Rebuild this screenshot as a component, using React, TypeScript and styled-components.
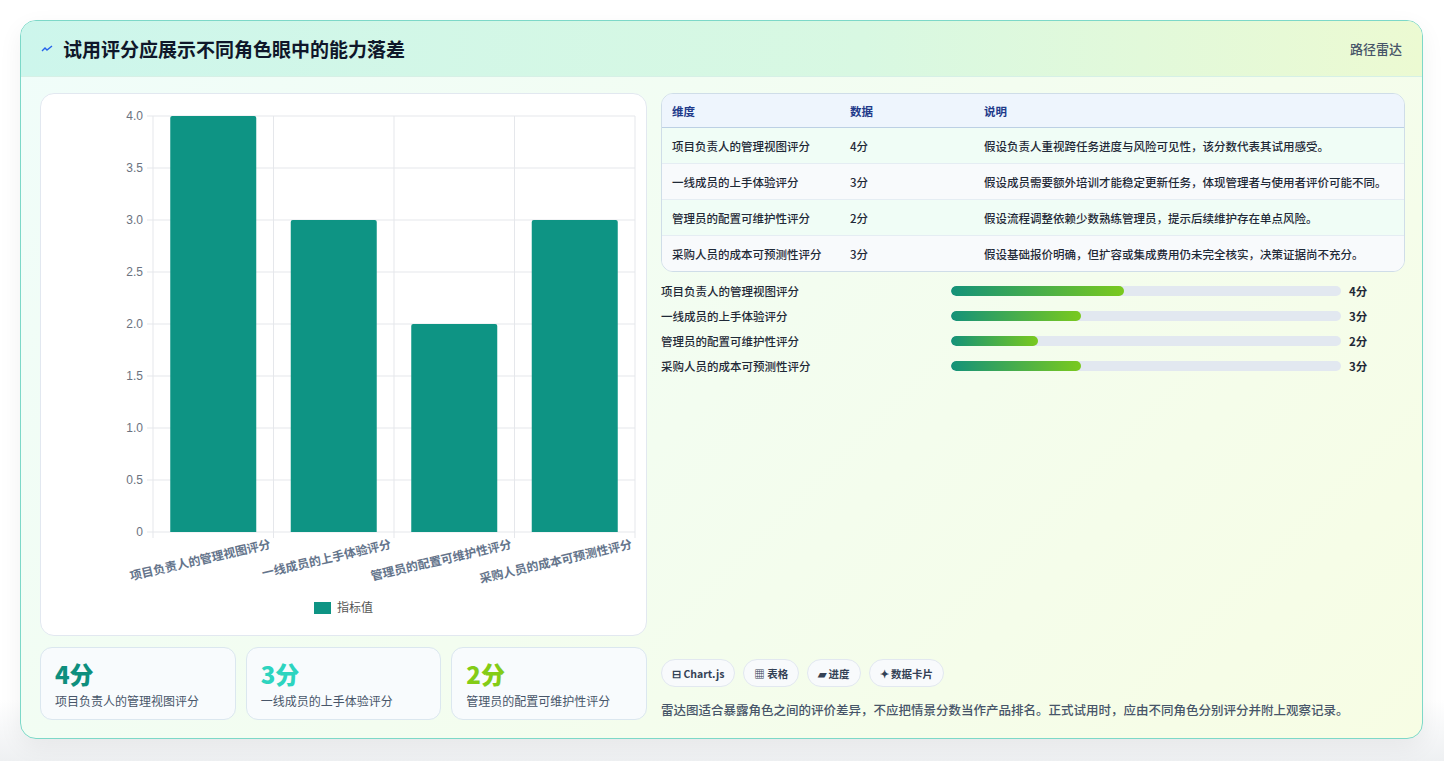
import React from "react";
import styled, { createGlobalStyle } from "styled-components";

const Global = createGlobalStyle`
  html, body { margin: 0; padding: 0; background: #f3f4f6; }
  body { font-family: "Noto Sans CJK SC", "Noto Sans", sans-serif; }
`;
const Page = styled.div`
  padding: 20px 21px 21px 20px; background: linear-gradient(#fff, #fff 700px, #eef0f2);
  height: 761px; box-sizing: border-box;
`;
const Card = styled.div`
  border: 1px solid #7dd8c8; border-radius: 16px; overflow: hidden;
  background: linear-gradient(135deg, #f0fdfa 0%, #f3fdf0 50%, #f7fde4 100%);
  box-shadow: 0 8px 24px rgba(0,0,0,0.06); height: 719px; box-sizing: border-box;
`;
const Header = styled.div`
  height: 55px; display: flex; align-items: center; justify-content: space-between;
  padding: 0 20px 0 20px; border-bottom: 1px solid #d6f0e6;
  background: linear-gradient(90deg, #cdf6ec 0%, #d8f8e2 60%, #ecfad2 100%);
`;
const Title = styled.h1`
  margin: 0; font-size: 19px; font-weight: 700; color: #0f172a; display: flex; align-items: center; gap: 10px;
`;
const HeadTag = styled.span` font-size: 13px; color: #475569; font-weight: 500; `;
const Body = styled.div`
  display: grid; grid-template-columns: 607px 744px; gap: 14px; padding: 16px 18px 18px 19px;
`;
const Col = styled.div` display: flex; flex-direction: column; `;
const ChartCard = styled.div`
  height: 543px; background: #fff; border: 1px solid #e2e8f0; border-radius: 14px; box-sizing: border-box;
`;
const Stats = styled.div` display: grid; grid-template-columns: repeat(3, 1fr); gap: 10px; margin-top: 11px; `;
const Stat = styled.div`
  height: 73px; box-sizing: border-box; border: 1px solid #dbe7ef; border-radius: 12px;
  background: #f8fbfd; padding: 12px 14px;
`;
const StatVal = styled.div<{ c: string }>` font-size: 24px; font-weight: 800; color: ${p => p.c}; line-height: 28px; `;
const StatLbl = styled.div` font-size: 12px; color: #475569; margin-top: 4px; `;
const Table = styled.div`
  border: 1px solid #cfdde8; border-radius: 12px; overflow: hidden; background: #f8fafc;
`;
const Row = styled.div<{ head?: boolean; alt?: boolean }>`
  display: grid; grid-template-columns: 178px 134px 1fr; padding: 0 10px; align-items: start;
  font-size: 11.5px; line-height: 18px; font-weight: ${p => p.head ? 600 : 500};
  color: ${p => p.head ? "#1e3a8a" : "#1f2937"};
  background: ${p => p.head ? "#eef5fd" : p.alt ? "#f0fdf6" : "#f8fafc"};
  border-bottom: ${p => p.head ? "1px solid #bcd0e4" : "1px solid #e5edf3"};
  padding-top: ${p => p.head ? 8 : 9}px; padding-bottom: ${p => p.head ? 7 : 8}px;
  &:last-child { border-bottom: none; }
`;
const Bars = styled.div` display: flex; flex-direction: column; gap: 7px; margin-top: 10px; `;
const BarRow = styled.div`
  display: grid; grid-template-columns: 282px 390px 1fr; column-gap: 8px; align-items: center;
  font-size: 11.5px; color: #1f2937; font-weight: 500; height: 18px;
`;
const Track = styled.div` height: 10px; border-radius: 5px; background: #e2e8f0; overflow: hidden; `;
const Fill = styled.div` height: 100%; border-radius: 5px; background: linear-gradient(90deg, #149279, #7ac91e); `;
const BarVal = styled.span` font-weight: 700; `;
const Spacer = styled.div` flex: 1; `;
const Chips = styled.div` display: flex; gap: 8px; `;
const Chip = styled.span`
  height: 28px; box-sizing: border-box; padding: 0 10px; border: 1px solid #e2e8f0; border-radius: 14px;
  background: #f8fafc; font-size: 10.5px; font-weight: 600; color: #334155; display: flex; align-items: center; gap: 3px;
`;
const Note = styled.p` margin: 13px 0 1px; font-size: 12.5px; color: #475569; font-weight: 500; `;

const data = [
  ["项目负责人的管理视图评分", 4, "假设负责人重视跨任务进度与风险可见性，该分数代表其试用感受。"],
  ["一线成员的上手体验评分", 3, "假设成员需要额外培训才能稳定更新任务，体现管理者与使用者评价可能不同。"],
  ["管理员的配置可维护性评分", 2, "假设流程调整依赖少数熟练管理员，提示后续维护存在单点风险。"],
  ["采购人员的成本可预测性评分", 3, "假设基础报价明确，但扩容或集成费用仍未完全核实，决策证据尚不充分。"],
] as const;

function Chart() {
  const x0 = 112, x1 = 594, y0 = 22, y1 = 438;
  const cw = (x1 - x0) / 4;
  const ticks = [0, 0.5, 1, 1.5, 2, 2.5, 3, 3.5, 4];
  return (
    <svg width="605" height="541" style={{ display: "block" }}>
      {ticks.map(t => {
        const y = y1 - (t / 4) * (y1 - y0);
        return <g key={t}>
          <line x1={x0 - 6} x2={x1} y1={y} y2={y} stroke="#e5e7eb" />
          <text x={x0 - 10} y={y + 4} textAnchor="end" fontSize="12" fill="#6b7280" fontFamily="Liberation Sans, sans-serif">{t === 0 ? "0" : t.toFixed(1)}</text>
        </g>;
      })}
      {[0, 1, 2, 3, 4].map(i => <line key={i} x1={x0 + i * cw} x2={x0 + i * cw} y1={y0} y2={y1 + 6} stroke="#e5e7eb" />)}
      {data.map((d, i) => {
        const h = (d[1] / 4) * (y1 - y0);
        const cx = x0 + cw * (i + 0.5);
        return <g key={i}>
          <path d={`M${cx - 43} ${y1} V${y1 - h + 2} Q${cx - 43} ${y1 - h} ${cx - 41} ${y1 - h} H${cx + 41} Q${cx + 43} ${y1 - h} ${cx + 43} ${y1 - h + 2} V${y1}Z`} fill="#0e9484" />
          <text transform={`translate(${cx + 58} ${y1 + 16}) rotate(-13)`} textAnchor="end" fontSize="12" fontWeight="600" fill="#64748b">{d[0]}</text>
        </g>;
      })}
      <rect x="273" y="508" width="17" height="12" fill="#0e9484" />
      <text x="296" y="518" fontSize="12" fill="#555">指标值</text>
    </svg>
  );
}

export default function App() {
  return (
    <Page>
      <Global />
      <Card>
        <Header>
          <Title>
            <svg width="12" height="10" viewBox="0 0 12 10"><path d="M1 7 L4 4 L6 6 L11 2" stroke="#2563eb" strokeWidth="1.4" fill="none" /></svg>
            试用评分应展示不同角色眼中的能力落差
          </Title>
          <HeadTag>路径雷达</HeadTag>
        </Header>
        <Body>
          <Col>
            <ChartCard><Chart /></ChartCard>
            <Stats>
              <Stat><StatVal c="#0e8f7e">4分</StatVal><StatLbl>项目负责人的管理视图评分</StatLbl></Stat>
              <Stat><StatVal c="#2dd4bf">3分</StatVal><StatLbl>一线成员的上手体验评分</StatLbl></Stat>
              <Stat><StatVal c="#84cc16">2分</StatVal><StatLbl>管理员的配置可维护性评分</StatLbl></Stat>
            </Stats>
          </Col>
          <Col>
            <Table>
              <Row head><span>维度</span><span>数据</span><span>说明</span></Row>
              {data.map((d, i) => (
                <Row key={i} alt={i % 2 === 0}><span>{d[0]}</span><span>{d[1]}分</span><span>{d[2]}</span></Row>
              ))}
            </Table>
            <Bars>
              {data.map((d, i) => (
                <BarRow key={i}>
                  <span>{d[0]}</span>
                  <Track><Fill style={{ width: `${(d[1] / 9) * 100}%` }} /></Track>
                  <BarVal>{d[1]}分</BarVal>
                </BarRow>
              ))}
            </Bars>
            <Spacer />
            <Chips>
              <Chip>⊟ Chart.js</Chip>
              <Chip>▦ 表格</Chip>
              <Chip>▰ 进度</Chip>
              <Chip>✦ 数据卡片</Chip>
            </Chips>
            <Note>雷达图适合暴露角色之间的评价差异，不应把情景分数当作产品排名。正式试用时，应由不同角色分别评分并附上观察记录。</Note>
          </Col>
        </Body>
      </Card>
    </Page>
  );
}
